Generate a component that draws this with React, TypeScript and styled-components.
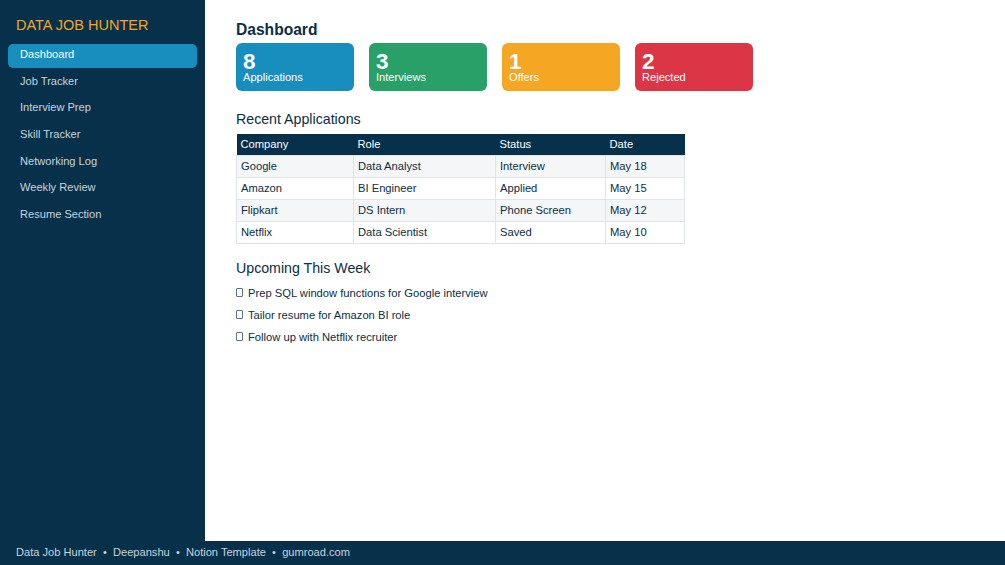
import React from 'react';
import styled, { createGlobalStyle } from 'styled-components';

const GlobalStyle = createGlobalStyle`
  html, body {
    margin: 0;
    padding: 0;
    background: #ffffff;
    font-family: 'Liberation Sans', Arial, sans-serif;
  }
`;

const navy = 'rgb(7, 48, 74)';
const ink = 'rgb(10, 46, 69)';

const Page = styled.div`
  width: 1005px;
  height: 565px;
  display: flex;
  flex-direction: column;
  overflow: hidden;
`;

const Body = styled.div`
  flex: 1;
  display: flex;
  min-height: 0;
`;

const Sidebar = styled.aside`
  width: 205px;
  flex-shrink: 0;
  background: ${navy};
  padding: 15px 8px 0;
  box-sizing: border-box;
`;

const Brand = styled.div`
  color: #f5a623;
  font-size: 14.5px;
  line-height: 20px;
  padding-left: 8px;
  margin-bottom: 9px;
`;

const NavItem = styled.div<{ $active?: boolean }>`
  height: 24px;
  box-sizing: border-box;
  padding: 3px 12px 7px;
  margin-bottom: 2.67px;
  font-size: 11.1px;
  line-height: 14px;
  border-radius: 5px;
  color: ${(p) => (p.$active ? '#ffffff' : '#c9d4de')};
  background: ${(p) => (p.$active ? 'rgb(24, 142, 190)' : 'transparent')};
`;

const Main = styled.main`
  flex: 1;
  padding: 19px 31px;
  color: ${ink};
`;

const Title = styled.h1`
  margin: 0;
  font-size: 15.6px;
  line-height: 21px;
  font-weight: 700;
`;

const Cards = styled.div`
  display: flex;
  gap: 15px;
  margin-top: 3px;
`;

const Card = styled.div<{ $bg: string }>`
  width: 118px;
  height: 48px;
  box-sizing: border-box;
  padding: 9px 7px 0;
  border-radius: 6px;
  background: ${(p) => p.$bg};
  color: #ffffff;
`;

const CardNumber = styled.div`
  font-size: 22.5px;
  line-height: 19px;
  font-weight: 700;
`;

const CardLabel = styled.div`
  font-size: 11.1px;
  line-height: 12px;
`;

const Section = styled.h2<{ $top: number }>`
  margin: ${(p) => p.$top}px 0 0;
  font-size: 14.2px;
  line-height: 20px;
  font-weight: 400;
`;

const Table = styled.table`
  margin-top: 5px;
  border-collapse: collapse;
  font-size: 11.2px;
  width: 448px;
  table-layout: fixed;
`;

const Th = styled.th<{ $w: number }>`
  width: ${(p) => p.$w}px;
  height: 21px;
  padding: 0 4px;
  text-align: left;
  font-weight: 400;
  color: #ffffff;
  background: ${navy};
  box-sizing: border-box;
`;

const Row = styled.tr<{ $shade: boolean }>`
  background: ${(p) => (p.$shade ? '#f4f6f8' : '#ffffff')};
`;

const Td = styled.td`
  height: 22px;
  padding: 0 4px;
  border: 1px solid #dfe4e8;
  box-sizing: border-box;
  color: ${ink};
`;

const Tasks = styled.ul`
  list-style: none;
  margin: 4px 0 0;
  padding: 0;
`;

const Task = styled.li`
  display: flex;
  align-items: center;
  height: 22px;
  font-size: 11.2px;
`;

const Box = styled.span`
  display: inline-block;
  width: 5px;
  height: 7px;
  border: 1px solid #5d7385;
  border-radius: 1px;
  margin-right: 5px;
`;

const Footer = styled.footer`
  height: 24px;
  flex-shrink: 0;
  background: ${navy};
  color: #c9d4de;
  font-size: 11.1px;
  line-height: 22px;
  padding-left: 16px;
`;

const nav = [
  'Dashboard',
  'Job Tracker',
  'Interview Prep',
  'Skill Tracker',
  'Networking Log',
  'Weekly Review',
  'Resume Section',
];

const stats = [
  { n: 8, label: 'Applications', bg: 'rgb(24, 142, 190)' },
  { n: 3, label: 'Interviews', bg: 'rgb(40, 160, 104)' },
  { n: 1, label: 'Offers', bg: 'rgb(245, 166, 35)' },
  { n: 2, label: 'Rejected', bg: 'rgb(220, 53, 69)' },
];

const columns = [
  { name: 'Company', w: 117 },
  { name: 'Role', w: 142 },
  { name: 'Status', w: 110 },
  { name: 'Date', w: 79 },
];

const apps = [
  ['Google', 'Data Analyst', 'Interview', 'May 18'],
  ['Amazon', 'BI Engineer', 'Applied', 'May 15'],
  ['Flipkart', 'DS Intern', 'Phone Screen', 'May 12'],
  ['Netflix', 'Data Scientist', 'Saved', 'May 10'],
];

const tasks = [
  'Prep SQL window functions for Google interview',
  'Tailor resume for Amazon BI role',
  'Follow up with Netflix recruiter',
];

const App: React.FC = () => (
  <Page>
    <GlobalStyle />
    <Body>
      <Sidebar>
        <Brand>DATA JOB HUNTER</Brand>
        {nav.map((item, i) => (
          <NavItem key={item} $active={i === 0}>
            {item}
          </NavItem>
        ))}
      </Sidebar>
      <Main>
        <Title>Dashboard</Title>
        <Cards>
          {stats.map((s) => (
            <Card key={s.label} $bg={s.bg}>
              <CardNumber>{s.n}</CardNumber>
              <CardLabel>{s.label}</CardLabel>
            </Card>
          ))}
        </Cards>
        <Section $top={18}>Recent Applications</Section>
        <Table>
          <thead>
            <tr>
              {columns.map((c) => (
                <Th key={c.name} $w={c.w}>
                  {c.name}
                </Th>
              ))}
            </tr>
          </thead>
          <tbody>
            {apps.map((row, i) => (
              <Row key={row[0]} $shade={i % 2 === 0}>
                {row.map((cell) => (
                  <Td key={cell}>{cell}</Td>
                ))}
              </Row>
            ))}
          </tbody>
        </Table>
        <Section $top={14}>Upcoming This Week</Section>
        <Tasks>
          {tasks.map((t) => (
            <Task key={t}>
              <Box />
              {t}
            </Task>
          ))}
        </Tasks>
      </Main>
    </Body>
    <Footer>Data Job Hunter &nbsp;•&nbsp; Deepanshu &nbsp;•&nbsp; Notion Template &nbsp;•&nbsp; gumroad.com</Footer>
  </Page>
);

export default App;
